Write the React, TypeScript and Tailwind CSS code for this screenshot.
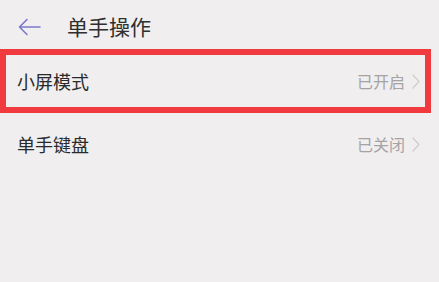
const font = { fontFamily: '"Noto Sans CJK SC", "Noto Sans", sans-serif' };

function Row({ label, value }: { label: string; value: string }) {
  return (
    <div className="flex h-full items-center justify-between pl-[11px] pr-[5px]">
      <span className="text-[18px] text-[#2a2a2a]">{label}</span>
      <span className="flex items-center gap-[7px] text-[16px] text-[#a5a3a4]">
        {value}
        <svg width="8" height="15" viewBox="0 0 8 15" fill="none">
          <path d="M1 1l6 6.5L1 14" stroke="#cfcdce" strokeWidth="1.3" strokeLinecap="round" strokeLinejoin="round" />
        </svg>
      </span>
    </div>
  );
}

export default function App() {
  return (
    <div className="h-[282px] w-[439px] overflow-hidden bg-[#f0eeef]" style={font}>
      <div className="flex h-[49px] items-center gap-[26px] pl-[18px] pt-[4px]">
        <svg width="23" height="18" viewBox="0 0 23 18" fill="none">
          <path d="M22 9H1.5M9 1.5L1.5 9 9 16.5" stroke="#7b79cc" strokeWidth="1.6" strokeLinecap="round" strokeLinejoin="round" />
        </svg>
        <span className="text-[21px] text-[#2f2f2f]">单手操作</span>
      </div>
      <div className="h-[64px] w-[431px] border-[6px] border-[#f03a3f]">
        <Row label="小屏模式" value="已开启" />
      </div>
      <div className="h-[62px] w-[431px] px-[6px]">
        <Row label="单手键盘" value="已关闭" />
      </div>
    </div>
  );
}
